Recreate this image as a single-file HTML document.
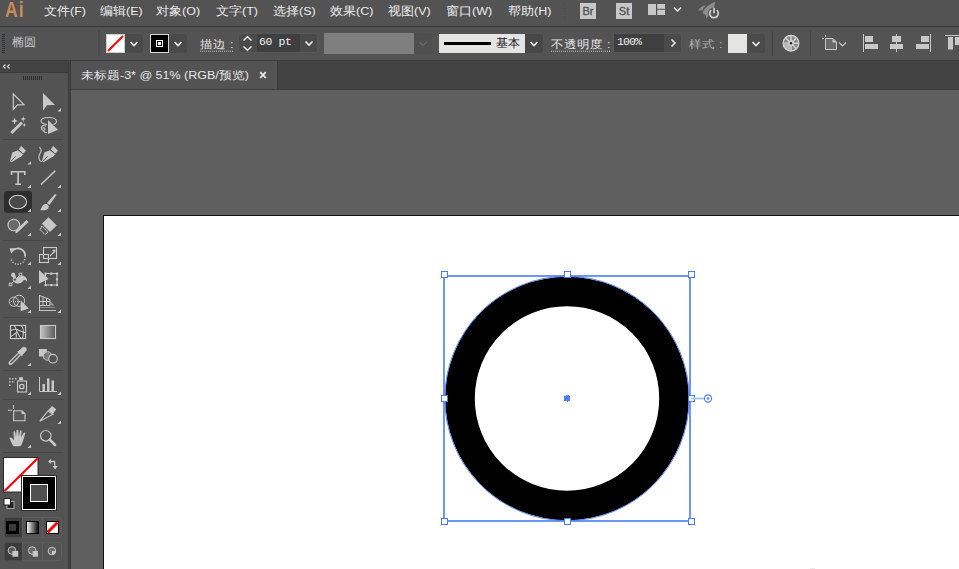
<!DOCTYPE html>
<html><head><meta charset="utf-8">
<style>
*{box-sizing:border-box;margin:0;padding:0}
html,body{width:959px;height:569px;overflow:hidden;background:#5f5f5f;font-family:"Liberation Sans",sans-serif;}
.abs{position:absolute}
#menubar{left:0;top:0;width:959px;height:26px;background:#535353;}
#mline{left:0;top:26px;width:959px;height:1px;background:#393939}
#ctrl{left:0;top:27px;width:959px;height:34px;background:#535353}
#cline{left:0;top:60px;width:959px;height:1px;background:#3c3c3c}
#tabbar{left:71px;top:61px;width:888px;height:29px;background:#434343}
#tab{left:71px;top:61px;width:206px;height:28px;background:#535353}
#tabline{left:71px;top:89px;width:888px;height:1px;background:#3e3e3e}
#canvas{left:71px;top:90px;width:888px;height:479px;background:#5f5f5f}
#panelhdr{left:0;top:61px;width:68px;height:11px;background:#434343;border-bottom:1px solid #3c3c3c;height:12px}
#panel{left:0;top:73px;width:68px;height:496px;background:#535353}
#pborder{left:68px;top:60px;width:3px;height:509px;background:linear-gradient(90deg,#393939 0 1px,#474747 1px 2px,#393939 2px 3px)}
#artboard{left:103px;top:215px;width:856px;height:354px;background:#fff;border-left:1px solid #111;border-top:1px solid #111}
.menu{top:0;height:25px;line-height:25px;font-size:12.5px;color:#ececec;white-space:nowrap;transform:scaleY(0.92);transform-origin:0 5px}

.sy{transform:scaleY(0.88);transform-origin:0 14px}
.lbl{font-size:12.5px;line-height:18px;white-space:nowrap}
.ul{background:linear-gradient(90deg,#cfcfcf 50%,transparent 50%) 0 16px/2px 1px repeat-x}
.dd{background:#4a4a4a}
.inbox{background:#3f3f3f}
.mono{font-family:"Liberation Mono",monospace;font-size:11.5px;line-height:12px;color:#f0f0f0}

.brst{width:16px;height:16px;background:#c8c8c8;color:#505050;font-size:11px;line-height:16px;text-align:center;letter-spacing:0px;-webkit-text-stroke:0.3px #505050}
</style></head><body>
<div id="menubar" class="abs"></div>
<div id="mline" class="abs"></div>
<div id="ctrl" class="abs"></div>
<div id="cline" class="abs"></div>
<div id="tabbar" class="abs"></div>
<div id="tab" class="abs"></div>
<div id="tabline" class="abs"></div>
<div class="abs" style="left:277px;top:61px;width:1px;height:28px;background:#3b3b3b"></div>
<div id="canvas" class="abs"></div>
<div id="panelhdr" class="abs"></div>
<div id="panel" class="abs"></div>
<div id="pborder" class="abs"></div>
<div id="artboard" class="abs"></div>
<!-- menu -->
<div class="abs" style="left:5px;top:-1px;font-size:22px;line-height:22px;color:#c98a5a;font-weight:bold;transform:scaleX(0.8);transform-origin:0 0;letter-spacing:1.2px">Ai</div>
<div class="abs menu" style="left:44px">文件(F)</div>
<div class="abs menu" style="left:100px">编辑(E)</div>
<div class="abs menu" style="left:156px">对象(O)</div>
<div class="abs menu" style="left:216px">文字(T)</div>
<div class="abs menu" style="left:273px">选择(S)</div>
<div class="abs menu" style="left:330px">效果(C)</div>
<div class="abs menu" style="left:388px">视图(V)</div>
<div class="abs menu" style="left:446px">窗口(W)</div>
<div class="abs menu" style="left:508px">帮助(H)</div>

<!-- control bar -->
<div class="abs" style="left:2px;top:34px;width:3px;height:19px;background:repeating-linear-gradient(#333 0 1px,transparent 1px 2px)"></div>
<div class="abs lbl" style="left:12px;top:33px;color:#c4c4c4;font-size:12px">椭圆</div>
<div class="abs" style="left:98px;top:31px;width:2px;height:25px;background:#494949"></div>
<div class="abs" style="left:106px;top:34px;width:19px;height:19px;background:#fff;border:1px solid #cfcfcf;overflow:hidden"><svg width="19" height="19" style="position:absolute;left:-1px;top:-1px"><line x1="2" y1="17" x2="17" y2="2" stroke="#f00" stroke-width="2"/></svg></div>
<div class="abs dd" style="left:125px;top:34px;width:18px;height:19px;border-radius:0 3px 3px 0"><svg width="18" height="19"><polyline points="5.5,8 9,11.5 12.5,8" fill="none" stroke="#eee" stroke-width="1.6"/></svg></div>
<div class="abs" style="left:150px;top:34px;width:19px;height:19px;background:#000;border:1px solid #d8d8d8"><div class="abs" style="left:5px;top:5px;width:7px;height:7px;border:1px solid #fff"></div><div class="abs" style="left:7px;top:7px;width:3px;height:3px;background:#fff"></div></div>
<div class="abs dd" style="left:169px;top:34px;width:18px;height:19px;border-radius:0 3px 3px 0"><svg width="18" height="19"><polyline points="5.5,8 9,11.5 12.5,8" fill="none" stroke="#eee" stroke-width="1.6"/></svg></div>
<div class="abs lbl ul sy" style="left:200px;top:35px;color:#e6e6e6">描边<span style="margin-left:4px">:</span></div>
<div class="abs" style="left:238px;top:33px;width:80px;height:20px;background:#4a4a4a;border:1px solid #575757;border-radius:3px"></div>
<svg class="abs" style="left:238px;top:33px" width="19" height="20"><polyline points="5.5,7.5 9.5,3.8 13.5,7.5" fill="none" stroke="#eee" stroke-width="1.5"/><polyline points="5.5,13.5 9.5,17.2 13.5,13.5" fill="none" stroke="#eee" stroke-width="1.5"/></svg>
<div class="abs inbox" style="left:257px;top:34px;width:43px;height:18px"></div>
<div class="abs mono" style="left:259px;top:36px;letter-spacing:-0.4px">60 pt</div>
<svg class="abs" style="left:300px;top:33px" width="18" height="20"><polyline points="5.5,8.5 9,12 12.5,8.5" fill="none" stroke="#eee" stroke-width="1.6"/></svg>
<div class="abs" style="left:324px;top:33px;width:90px;height:21px;background:#7f7f7f"></div>
<div class="abs" style="left:414px;top:33px;width:18px;height:21px;background:#4f4f4f;border-radius:0 3px 3px 0"><svg width="18" height="21"><polyline points="5.5,9 9,12.5 12.5,9" fill="none" stroke="#666" stroke-width="1.5"/></svg></div>
<div class="abs" style="left:439px;top:34px;width:86px;height:19px;background:#e4e5e3"></div>
<div class="abs" style="left:444px;top:42px;width:47px;height:3px;background:#000"></div>
<div class="abs" style="left:496px;top:35px;font-size:12px;line-height:16px;color:#222">基本</div>
<div class="abs dd" style="left:525px;top:34px;width:18px;height:19px;border-radius:0 3px 3px 0;background:#474747"><svg width="18" height="19"><polyline points="5.5,8 9,11.5 12.5,8" fill="none" stroke="#eee" stroke-width="1.6"/></svg></div>
<div class="abs lbl ul sy" style="left:551px;top:35px;color:#e6e6e6">不透明度<span style="margin-left:4px">:</span></div>
<div class="abs" style="left:613px;top:33px;width:69px;height:20px;background:#4a4a4a;border:1px solid #575757;border-radius:3px"></div>
<div class="abs inbox" style="left:614px;top:34px;width:50px;height:18px"></div>
<div class="abs mono" style="left:617px;top:36px;letter-spacing:-0.9px">100%</div>
<svg class="abs" style="left:664px;top:33px" width="18" height="20"><polyline points="7.5,6.5 11,10 7.5,13.5" fill="none" stroke="#eee" stroke-width="1.6"/></svg>
<div class="abs lbl sy" style="left:689px;top:35px;color:#b3b3b3">样式<span style="margin-left:4px">:</span></div>
<div class="abs" style="left:728px;top:34px;width:19px;height:19px;background:#e4e5e3"></div>
<div class="abs dd" style="left:747px;top:34px;width:18px;height:19px;border-radius:0 3px 3px 0"><svg width="18" height="19"><polyline points="5.5,8 9,11.5 12.5,8" fill="none" stroke="#eee" stroke-width="1.6"/></svg></div>
<div class="abs" style="left:772px;top:31px;width:1px;height:25px;background:#444"></div>
<div class="abs" style="left:810px;top:31px;width:1px;height:25px;background:#444"></div>


<!-- toolbox -->
<svg class="abs" style="left:0;top:0" width="71" height="569" viewBox="0 0 71 569">
<g fill="none" stroke="#2f2f2f" stroke-width="1">
<path d="M5.5 64.5 L3.5 66.5 L5.5 68.5 M9.5 64.5 L7.5 66.5 L9.5 68.5" stroke="#cfcfcf" stroke-width="1.3"/>
</g>
<g fill="#2c2c2c"><rect x="23" y="76" width="1" height="4"/><rect x="25" y="76" width="1" height="4"/><rect x="27" y="76" width="1" height="4"/><rect x="29" y="76" width="1" height="4"/><rect x="31" y="76" width="1" height="4"/><rect x="33" y="76" width="1" height="4"/><rect x="35" y="76" width="1" height="4"/><rect x="37" y="76" width="1" height="4"/><rect x="39" y="76" width="1" height="4"/><rect x="41" y="76" width="1" height="4"/></g>
<!-- separators -->
<g fill="#474747"><rect x="3" y="139" width="60" height="1"/><rect x="3" y="240" width="60" height="1"/><rect x="3" y="317" width="60" height="1"/><rect x="3" y="370" width="60" height="1"/><rect x="3" y="399" width="60" height="1"/><rect x="3" y="452" width="60" height="1"/></g>
<!-- selected ellipse bg -->
<rect x="4" y="191" width="28" height="21.7" rx="3" fill="#2d2d2d"/>
<g fill="#c8c8c8" stroke="none">
<!-- flyout triangles -->
<path d="M57.5 111.5 L61 108 L61 111.5Z"/>
<path d="M27.5 164.5 L31 161 L31 164.5Z"/>
<path d="M27.5 188 L31 184.5 L31 188Z"/><path d="M57.5 188 L61 184.5 L61 188Z"/>
<path d="M27.5 212 L31 208.5 L31 212Z"/><path d="M57.5 212 L61 208.5 L61 212Z"/>
<path d="M27.5 236 L31 232.5 L31 236Z"/><path d="M57.5 236 L61 232.5 L61 236Z"/>
<path d="M27.5 265 L31 261.5 L31 265Z"/><path d="M57.5 265 L61 261.5 L61 265Z"/>
<path d="M27.5 289 L31 285.5 L31 289Z"/>
<path d="M27.5 313 L31 309.5 L31 313Z"/><path d="M57.5 313 L61 309.5 L61 313Z"/>
<path d="M27.5 366 L31 362.5 L31 366Z"/>
<path d="M27.5 395 L31 391.5 L31 395Z"/><path d="M57.5 395 L61 391.5 L61 395Z"/>
<path d="M57.5 424 L61 420.5 L61 424Z"/>
<path d="M27.5 448 L31 444.5 L31 448Z"/>
</g>
<g stroke="#c8c8c8" fill="none" stroke-width="1.2" stroke-linejoin="miter">
<!-- selection -->
<path d="M13.3 94 L24 104.6 L17.5 104.8 L13.3 109.5 Z"/>
</g>
<g fill="#c8c8c8">
<!-- direct selection -->
<path d="M43 93 L55 105 L47 105.3 L43 110.5 Z"/>
<!-- magic wand -->
<path d="M10.3 132 L21 121.5 L23 123.5 L12.3 134 Z"/>
<path d="M14.6 117.5 L15.5 120 L18 121 L15.5 122 L14.6 124.5 L13.7 122 L11.2 121 L13.7 120Z"/>
<path d="M23.3 116 L24 118.3 L26.2 119 L24 119.7 L23.3 122 L22.6 119.7 L20.4 119 L22.6 118.3Z"/>
<path d="M24.3 123 L24.9 124.5 L26.4 125 L24.9 125.5 L24.3 127 L23.7 125.5 L22.2 125 L23.7 124.5Z"/>
<!-- lasso arrow -->
<path d="M48 120 L58 129.8 L48 134 Z"/>
</g>
<g stroke="#c8c8c8" fill="none" stroke-width="1.1">
<path d="M47 124.5 C44 124 41 123 41 121 C41 118.5 45 117.5 49 117.5 C53 117.5 56.5 119 56.5 121.5 C56.5 123 55 124 53.5 124.5"/>
<path d="M46 126 C43 124.5 40.5 126.5 41.5 129 C42.5 131 45 130.5 45 129 C45 127.5 43 127.5 42.5 128.5 M43.5 130.5 C44 132 45.5 133 47 132.5" />
</g>
<!-- pen -->
<g fill="#c8c8c8">
<path d="M17.8 150.3 L12.3 152.5 L10 161.3 L11.5 162.2 L21.5 156.2 L23.2 154.3 Z"/>
<path d="M18.8 149.3 L21.2 146 L26 150.8 L23.2 153.4 Z"/>
<path d="M49.8 150.3 L44.3 152.5 L42 161.3 L43.5 162.2 L53.5 156.2 L55.2 154.3 Z"/>
<path d="M50.8 149.3 L53.2 146 L58 150.8 L55.2 153.4 Z"/>
</g>
<g stroke="#535353" stroke-width="0.9"><path d="M10.8 161.5 L15.6 156.3"/><path d="M42.8 161.5 L47.6 156.3"/></g>
<path d="M39.3 147.5 C41.5 148.5 41.5 151 40.3 153 C38.8 155.5 38.5 158 39.5 160 C40 161 41 161.5 42 161.5" stroke="#c8c8c8" stroke-width="1.1" fill="none"/>
<!-- type T -->
<path d="M11.5 175 L11.5 171.8 L24.8 171.8 L24.8 175 M18.1 171.8 L18.1 184.2 M15.3 184.2 L21 184.2" stroke="#c8c8c8" stroke-width="1.6" fill="none"/>
<!-- line -->
<path d="M41 184.5 L55.3 170.8" stroke="#c8c8c8" stroke-width="1.5"/>
<!-- ellipse -->
<ellipse cx="17.9" cy="202" rx="8.7" ry="6.8" fill="#4a4a4a" stroke="#cccccc" stroke-width="1.1"/>
<!-- paintbrush -->
<path d="M47 203 L55 194 L56.5 195 L49.5 205 Z" fill="#c8c8c8"/>
<path d="M40.2 210 C42 208 42 205 45 204 C47.5 203.5 49.5 205.5 48.5 208 C47.5 210.5 43 210.5 40.2 210 Z" fill="#c8c8c8"/>
<!-- shaper -->
<circle cx="13.8" cy="225" r="5.8" fill="#6a6a6a" stroke="#c8c8c8" stroke-width="1.1"/>
<path d="M15.5 230.5 L26.5 220 L28.5 222 L17.5 232.5 L15.5 233.5 Z" fill="#c8c8c8"/>
<!-- eraser -->
<path d="M48.5 217.3 L56.7 225.5 L50 232 L41.8 223.8 Z" fill="#c8c8c8"/>
<path d="M41.8 226 L48 232.2 L45 234.5 L40.2 229.7 Z" fill="none" stroke="#c8c8c8" stroke-width="1"/>
<!-- rotate -->
<path d="M14 249.8 A7 7 0 0 1 25 256.3" stroke="#c8c8c8" stroke-width="1.8" fill="none"/>
<path d="M25 256.3 A7 7 0 0 1 10.8 258" stroke="#c8c8c8" stroke-width="1.4" fill="none" stroke-dasharray="1.2 1.6"/>
<path d="M9.5 248.3 L16 248.3 L11.2 253.5 Z" fill="#c8c8c8"/>
<!-- scale -->
<g stroke="#c8c8c8" stroke-width="1.1" fill="none">
<rect x="43.5" y="247.5" width="13" height="11"/>
<rect x="39.5" y="254.5" width="9" height="8"/>
<path d="M50 256 L55 251"/>
</g>
<path d="M52 250 L55.5 249.5 L55 253Z" fill="#c8c8c8"/>
<!-- puppet warp -->
<path d="M11 276 C11 273 13 271.5 14.5 273 C15.5 274.5 15.5 277 16.5 278.5 C18.5 277 21 275 24 276 C26 277 27.5 279 27 282 C26 280 24.5 279.5 23.5 280.5 C22 282.5 20 284 17 283.5 C14 283 12.5 281 13 279 C13.5 277.5 12.5 276.5 11 276 Z" fill="#c8c8c8"/>
<path d="M11 284 L20.5 274.5" stroke="#c8c8c8" stroke-width="0.9"/>
<circle cx="14.9" cy="279.6" r="1.7" fill="#535353" stroke="#c8c8c8" stroke-width="0.9"/>
<rect x="9.2" y="283.2" width="2.6" height="2.6" fill="#535353" stroke="#c8c8c8" stroke-width="0.9"/>
<rect x="19.2" y="273.2" width="2.6" height="2.6" fill="#535353" stroke="#c8c8c8" stroke-width="0.9"/>
<!-- free transform -->
<rect x="45.5" y="273.5" width="11.5" height="11.5" fill="none" stroke="#c8c8c8" stroke-width="1"/>
<g fill="#c8c8c8"><rect x="44.5" y="272.5" width="2.2" height="2.2"/><rect x="50.2" y="272.5" width="2.2" height="2.2"/><rect x="55.9" y="272.5" width="2.2" height="2.2"/><rect x="44.5" y="284" width="2.2" height="2.2"/><rect x="50.2" y="284" width="2.2" height="2.2"/><rect x="55.9" y="284" width="2.2" height="2.2"/><rect x="55.9" y="278.2" width="2.2" height="2.2"/></g>
<path d="M39 270 L48.7 279 L39 283.6 Z" fill="#c8c8c8"/>
<!-- shape builder -->
<g stroke="#c8c8c8" stroke-width="1" fill="none"><circle cx="13.8" cy="301.7" r="4.6"/><circle cx="19" cy="300.8" r="5.6"/></g>
<g fill="#c8c8c8"><rect x="11" y="301" width="1" height="1"/><rect x="13" y="301" width="1" height="1"/><rect x="15" y="301" width="1" height="1"/><rect x="17" y="301" width="1" height="1"/><rect x="19" y="301" width="1" height="1"/></g>
<path d="M20.6 300.3 L28.8 308.5 L20.6 311.3 Z" fill="#c8c8c8"/>
<!-- perspective grid -->
<g stroke="#c8c8c8" stroke-width="1" fill="none">
<path d="M39.5 295 L39.5 311 M39.5 295.5 L50 299.5 L50 305.5 M39.5 305.5 L50 305.5 M39.5 301.5 L50 301.5 M43 296.5 L43 305.5 M46.5 297.8 L46.5 305.5"/>
<path d="M39.5 307.5 L55.5 307.5" stroke-dasharray="1 1"/>
<path d="M39.5 310.5 L56 310.5"/>
</g>
<path d="M50 301 L54.5 305.5 L50 305.5Z" fill="#9a9a9a"/>
<!-- mesh -->
<rect x="10.5" y="325.5" width="15" height="13" fill="#404040" stroke="#c8c8c8" stroke-width="1.2"/>
<g stroke="#c8c8c8" stroke-width="1.1" fill="none">
<path d="M14.5 325.5 C15.5 328 16.5 330 17 331.5 C18 334 19.5 336 20.5 338.5"/>
<path d="M11 330.5 C13 329.5 15 329 17 329.5 C19.5 330.5 21.5 332 25.5 332.5"/>
<path d="M21.5 325.5 C23 328 23.8 331 23.5 333 C23.2 335 22.8 337 22.5 338.5"/>
<path d="M11 336.5 C13 335 15 334 17 332 M16 333.5 C16.5 335 16.5 337 16 338.5"/>
</g>
<!-- gradient -->
<defs><linearGradient id="gr" x1="0" x2="1"><stop offset="0" stop-color="#c4c4c4"/><stop offset="1" stop-color="#585858"/></linearGradient>
<linearGradient id="gr2" x1="0" x2="1"><stop offset="0" stop-color="#fff"/><stop offset="1" stop-color="#000"/></linearGradient></defs>
<rect x="40.5" y="325.5" width="15" height="13" fill="url(#gr)" stroke="#c8c8c8" stroke-width="1.1"/>
<!-- eyedropper -->
<path d="M10.5 363 L19 354.5" stroke="#c8c8c8" stroke-width="4" stroke-linecap="round"/>
<path d="M11 362.5 L19 354.5" stroke="#535353" stroke-width="1.6" stroke-linecap="round"/>
<path d="M18 352 L23 347.5 C25 346.5 27 348.5 26 350.5 L21.5 355.5 Z M17.5 351 L22.5 356" fill="#c8c8c8" stroke="#c8c8c8" stroke-width="1"/>
<!-- blend -->
<rect x="39" y="349" width="7.8" height="7.5" fill="#c8c8c8"/>
<circle cx="47.5" cy="356" r="4.3" fill="#7a7a7a" stroke="#c8c8c8" stroke-width="1"/>
<circle cx="53" cy="358.7" r="4.3" fill="#535353" stroke="#c8c8c8" stroke-width="1.1"/>
<!-- symbol sprayer -->
<g fill="#c8c8c8"><rect x="9" y="378" width="1.5" height="1.5"/><rect x="12" y="378" width="1.5" height="1.5"/><rect x="15" y="378" width="1.5" height="1.5"/><rect x="9" y="381" width="1.5" height="1.5"/><rect x="12" y="381" width="1.5" height="1.5"/><rect x="9" y="384.5" width="1.5" height="1.5"/><rect x="19" y="377.3" width="4" height="3"/></g>
<rect x="17.5" y="381" width="9" height="11" fill="none" stroke="#c8c8c8" stroke-width="1.1"/>
<circle cx="21.8" cy="386.5" r="2.2" fill="none" stroke="#c8c8c8" stroke-width="1.3"/>
<!-- column graph -->
<path d="M39.5 377 L39.5 391.5 L57 391.5" stroke="#c8c8c8" stroke-width="1" fill="none"/>
<g fill="#c8c8c8"><rect x="42.5" y="384" width="2.5" height="7"/><rect x="47" y="378.5" width="2.5" height="12.5"/><rect x="51.5" y="380.5" width="2.5" height="10.5"/></g>
<!-- artboard -->
<path d="M8 410.3 L12 410.3 M13.6 405 L13.6 409" stroke="#c8c8c8" stroke-width="1"/>
<path d="M13.6 410.8 L22 410.8 L25 413.8 L25 420.8 L13.6 420.8 Z" fill="#5a5a5a" stroke="#c8c8c8" stroke-width="1.1"/>
<path d="M21.5 410.8 L21.5 414 L25 414 Z" fill="#c8c8c8"/>
<!-- slice -->
<path d="M39.8 421.2 L48 411 L53 414.2 Z" fill="none" stroke="#c8c8c8" stroke-width="1.1"/>
<path d="M48 410.5 L52 406 L56.2 409.2 L53 413.8 Z" fill="#c8c8c8"/>
<!-- hand -->
<path d="M13.5 446.3 C12 444 10.5 441 9.8 438.5 C9.5 437.5 11 437 12 438 L14 440.5 L13.5 432 C13.5 431 15 431 15.2 432 L16 437 L16.5 430.5 C16.7 429.5 18.2 429.5 18.3 430.5 L18.8 437 L20 431 C20.2 430 21.7 430 21.6 431.2 L21.2 437.5 L23.5 433 C24 432 25.5 432.5 25.2 433.5 L23 441 C22 444 21 446 20 446.3 Z" fill="#c8c8c8"/>
<!-- zoom -->
<circle cx="45.8" cy="435.8" r="5.3" fill="none" stroke="#c8c8c8" stroke-width="1.2"/>
<path d="M49.7 439.7 L55 445" stroke="#c8c8c8" stroke-width="2.6" stroke-linecap="round"/>
<!-- fill swatch -->
<rect x="3.5" y="457.5" width="34.5" height="34.5" fill="#fff" stroke="#2a2a2a" stroke-width="1"/>
<path d="M4.5 491 L37.5 458.5" stroke="#f00" stroke-width="2.2"/>
<!-- stroke swatch -->
<rect x="21" y="475" width="36" height="36" fill="#2a2a2a"/>
<rect x="22.5" y="476.5" width="33" height="33" fill="#000" stroke="#fff" stroke-width="1"/>
<rect x="30.5" y="484.5" width="17" height="17" fill="#505050" stroke="#fff" stroke-width="1"/>
<!-- swap -->
<path d="M50 461.5 L54.5 461.5 L55 467" stroke="#c8c8c8" stroke-width="1.3" fill="none"/>
<path d="M48 461.5 L51 459 L51 464 Z M52.5 466 L57.8 466 L55 469.5 Z" fill="#c8c8c8"/>
<!-- default mini -->
<rect x="7" y="501.5" width="7" height="7" fill="#222" stroke="#aaa" stroke-width="1"/>
<rect x="4" y="498.5" width="6.5" height="6.5" fill="#fff" stroke="#222" stroke-width="1"/>
<!-- color mode group -->
<rect x="4.5" y="517.5" width="57" height="20" rx="3" fill="#535353" stroke="#5e5e5e" stroke-width="1"/>
<path d="M7 517.5 L22 517.5 L22 537.5 L7 537.5 Q4.5 537.5 4.5 535 L4.5 520 Q4.5 517.5 7 517.5 Z" fill="#3c3c3c"/>
<path d="M22.5 518 L22.5 537 M42.5 518 L42.5 537" stroke="#5e5e5e" stroke-width="1"/>
<rect x="6" y="521" width="13" height="13" fill="#000"/>
<rect x="8.8" y="523.9" width="7.3" height="7" fill="#3a3a3a"/>
<rect x="26.5" y="521.5" width="12" height="12" fill="url(#gr2)" stroke="#000" stroke-width="1"/>
<rect x="46.5" y="521.5" width="12" height="12" fill="#fff" stroke="#000" stroke-width="1"/>
<path d="M47.5 532.5 L57.5 522.5" stroke="#f00" stroke-width="3"/>
<!-- draw mode group -->
<rect x="4.5" y="542.5" width="57" height="18" rx="3" fill="#535353" stroke="#5e5e5e" stroke-width="1"/>
<path d="M7 542.5 L22 542.5 L22 560.5 L7 560.5 Q4.5 560.5 4.5 558 L4.5 545 Q4.5 542.5 7 542.5 Z" fill="#3c3c3c"/>
<path d="M22.5 543 L22.5 560 M42.5 543 L42.5 560" stroke="#5e5e5e" stroke-width="1"/>
<circle cx="12" cy="550.5" r="3.8" fill="#5a5a5a" stroke="#c8c8c8" stroke-width="1"/>
<rect x="12.4" y="551" width="5.8" height="5.7" fill="#c8c8c8"/>
<circle cx="32.2" cy="550.5" r="3.8" fill="#6a6a6a" stroke="#c8c8c8" stroke-width="1"/>
<rect x="32.7" y="551" width="5.2" height="5.7" fill="#c8c8c8"/>
<circle cx="51.9" cy="551" r="3.8" fill="#6a6a6a" stroke="#c8c8c8" stroke-width="1"/>
<path d="M51.9 551 L55.7 551 A3.8 3.8 0 0 1 51.9 554.8 Z" fill="#c8c8c8"/>
</svg>


<!-- menu right icons -->
<div class="abs" style="left:564px;top:2px;width:1px;height:19px;background:repeating-linear-gradient(#474747 0 1px,#5a5a5a 1px 2px)"></div>
<div class="abs brst" style="left:580px;top:3px">Br</div>
<div class="abs brst" style="left:616px;top:3px">St</div>
<svg class="abs" style="left:640px;top:0" width="90" height="25">
<g fill="#c8c8c8"><rect x="8" y="4" width="8" height="11"/><rect x="17.2" y="4" width="7.8" height="4.8"/><rect x="17.2" y="9.8" width="7.8" height="5.2"/></g>
<polyline points="34,7.5 37.5,11 41,7.5" fill="none" stroke="#e6e6e6" stroke-width="1.5"/>
<path d="M62.5 13 C64 8.5 69 4 75 2 C75 6 73 10 70 13 L66.5 18.5 L65.5 15 Z" fill="#8c8c8c"/>
<path d="M58 10.5 C60 7.5 63 5.5 66 5 C64 7 63 9 62.5 10.5 Z" fill="#8a8a8a"/>
<circle cx="74" cy="13.5" r="6" fill="#535353"/>
<path d="M71.2 10.2 A4.3 4.3 0 1 0 76.8 10.2" fill="none" stroke="#d0d0d0" stroke-width="1.7"/>
<path d="M74 7.8 L74 13.2" stroke="#d0d0d0" stroke-width="1.7"/>
</svg>
<!-- control right icons -->
<svg class="abs" style="left:770px;top:27px" width="189" height="33">
<circle cx="21" cy="16.3" r="8" fill="#858585"/>
<g stroke="#cfcfcf" stroke-width="1.6"><path d="M21 8.5 L21 24 M13.2 16.3 L28.8 16.3 M15.5 10.8 L26.5 21.8 M26.5 10.8 L15.5 21.8"/></g>
<path d="M13.5 16.3 A7.5 7.5 0 0 0 21 23.8 L21 16.3 Z" fill="#b8b8b8"/>
<circle cx="21" cy="16.3" r="3" fill="#cfcfcf"/>
<circle cx="21" cy="16.3" r="1.2" fill="#222"/>
<circle cx="21" cy="16.3" r="7.8" fill="none" stroke="#d2d2d2" stroke-width="1.4"/>
<path d="M55.5 8 L55.5 10 M52 11.5 L54 11.5" stroke="#c8c8c8" stroke-width="1"/>
<path d="M55.5 11.5 L63 11.5 L66.5 15 L66.5 22.5 L55.5 22.5 Z" fill="#6a6a6a" stroke="#c8c8c8" stroke-width="1"/><path d="M62.5 11.5 L62.5 15.5 L66.5 15.5 Z" fill="#c8c8c8"/>
<polyline points="69,15.5 72.5,19 76,15.5" fill="none" stroke="#c8c8c8" stroke-width="1.1"/>
<g fill="#c8c8c8">
<rect x="93" y="7" width="1" height="18"/><rect x="95" y="9" width="8" height="6"/><rect x="95" y="17" width="13" height="5"/>
<rect x="126" y="7" width="1" height="18"/><rect x="122" y="9" width="9" height="6"/><rect x="120" y="17" width="13" height="5"/>
<rect x="160" y="7" width="1" height="18"/><rect x="151" y="9" width="8" height="6"/><rect x="146" y="17" width="13" height="5"/>
<rect x="175" y="8" width="14" height="1"/><rect x="178" y="10" width="5" height="12.5"/><rect x="185" y="10" width="4" height="8"/>
</g>
</svg>
<!-- tab -->
<div class="abs" style="left:81px;top:68px;font-size:12.5px;line-height:16px;color:#e6e6e6;white-space:nowrap;transform:scaleY(0.86);transform-origin:0 50%">未标题-3* @ 51% (RGB/预览)</div>
<svg class="abs" style="left:258px;top:70px" width="10" height="10"><path d="M2.2 2.2 L7.8 7.8 M7.8 2.2 L2.2 7.8" stroke="#e8e8e8" stroke-width="1.8"/></svg>

<!-- circle -->
<svg class="abs" style="left:0;top:0" width="959" height="569">
<circle cx="567" cy="398.5" r="107" fill="none" stroke="#000" stroke-width="29.6"/>
<circle cx="567" cy="398.5" r="122.2" fill="none" stroke="#4c7cf5" stroke-width="0.9"/>
<g fill="none" stroke="#4c7cf5" stroke-width="1">
<rect x="444" y="276" width="246" height="245" stroke-width="1.6"/>
</g>
<g fill="#fff" stroke="#4c7cf5" stroke-width="1">
<rect x="441.5" y="271.5" width="6" height="6"/>
<rect x="564.5" y="271.5" width="6" height="6"/>
<rect x="688.5" y="271.5" width="6" height="6"/>
<rect x="441.5" y="395.5" width="6" height="6"/>
<rect x="688.5" y="395.5" width="6" height="6"/>
<rect x="441.5" y="518.5" width="6" height="6"/>
<rect x="564.5" y="518.5" width="6" height="6"/>
<rect x="688.5" y="518.5" width="6" height="6"/>
</g>
<path d="M691 398.5 L704 398.5" stroke="#9cc8e8" stroke-width="1.8"/>
<circle cx="708" cy="398.5" r="3.6" fill="#fff" stroke="#4c7cf5" stroke-width="1.1"/>
<circle cx="708" cy="398.5" r="1.2" fill="#4c7cf5"/>
<rect x="564" y="396" width="6" height="5" fill="#4a7dfa"/><rect x="566" y="395" width="3" height="1" fill="#6aa0f0"/><rect x="567" y="401" width="1" height="1" fill="#4a7dfa"/>
<rect x="810" y="568" width="5" height="1" fill="#ececec"/>
</svg>
</body></html>
